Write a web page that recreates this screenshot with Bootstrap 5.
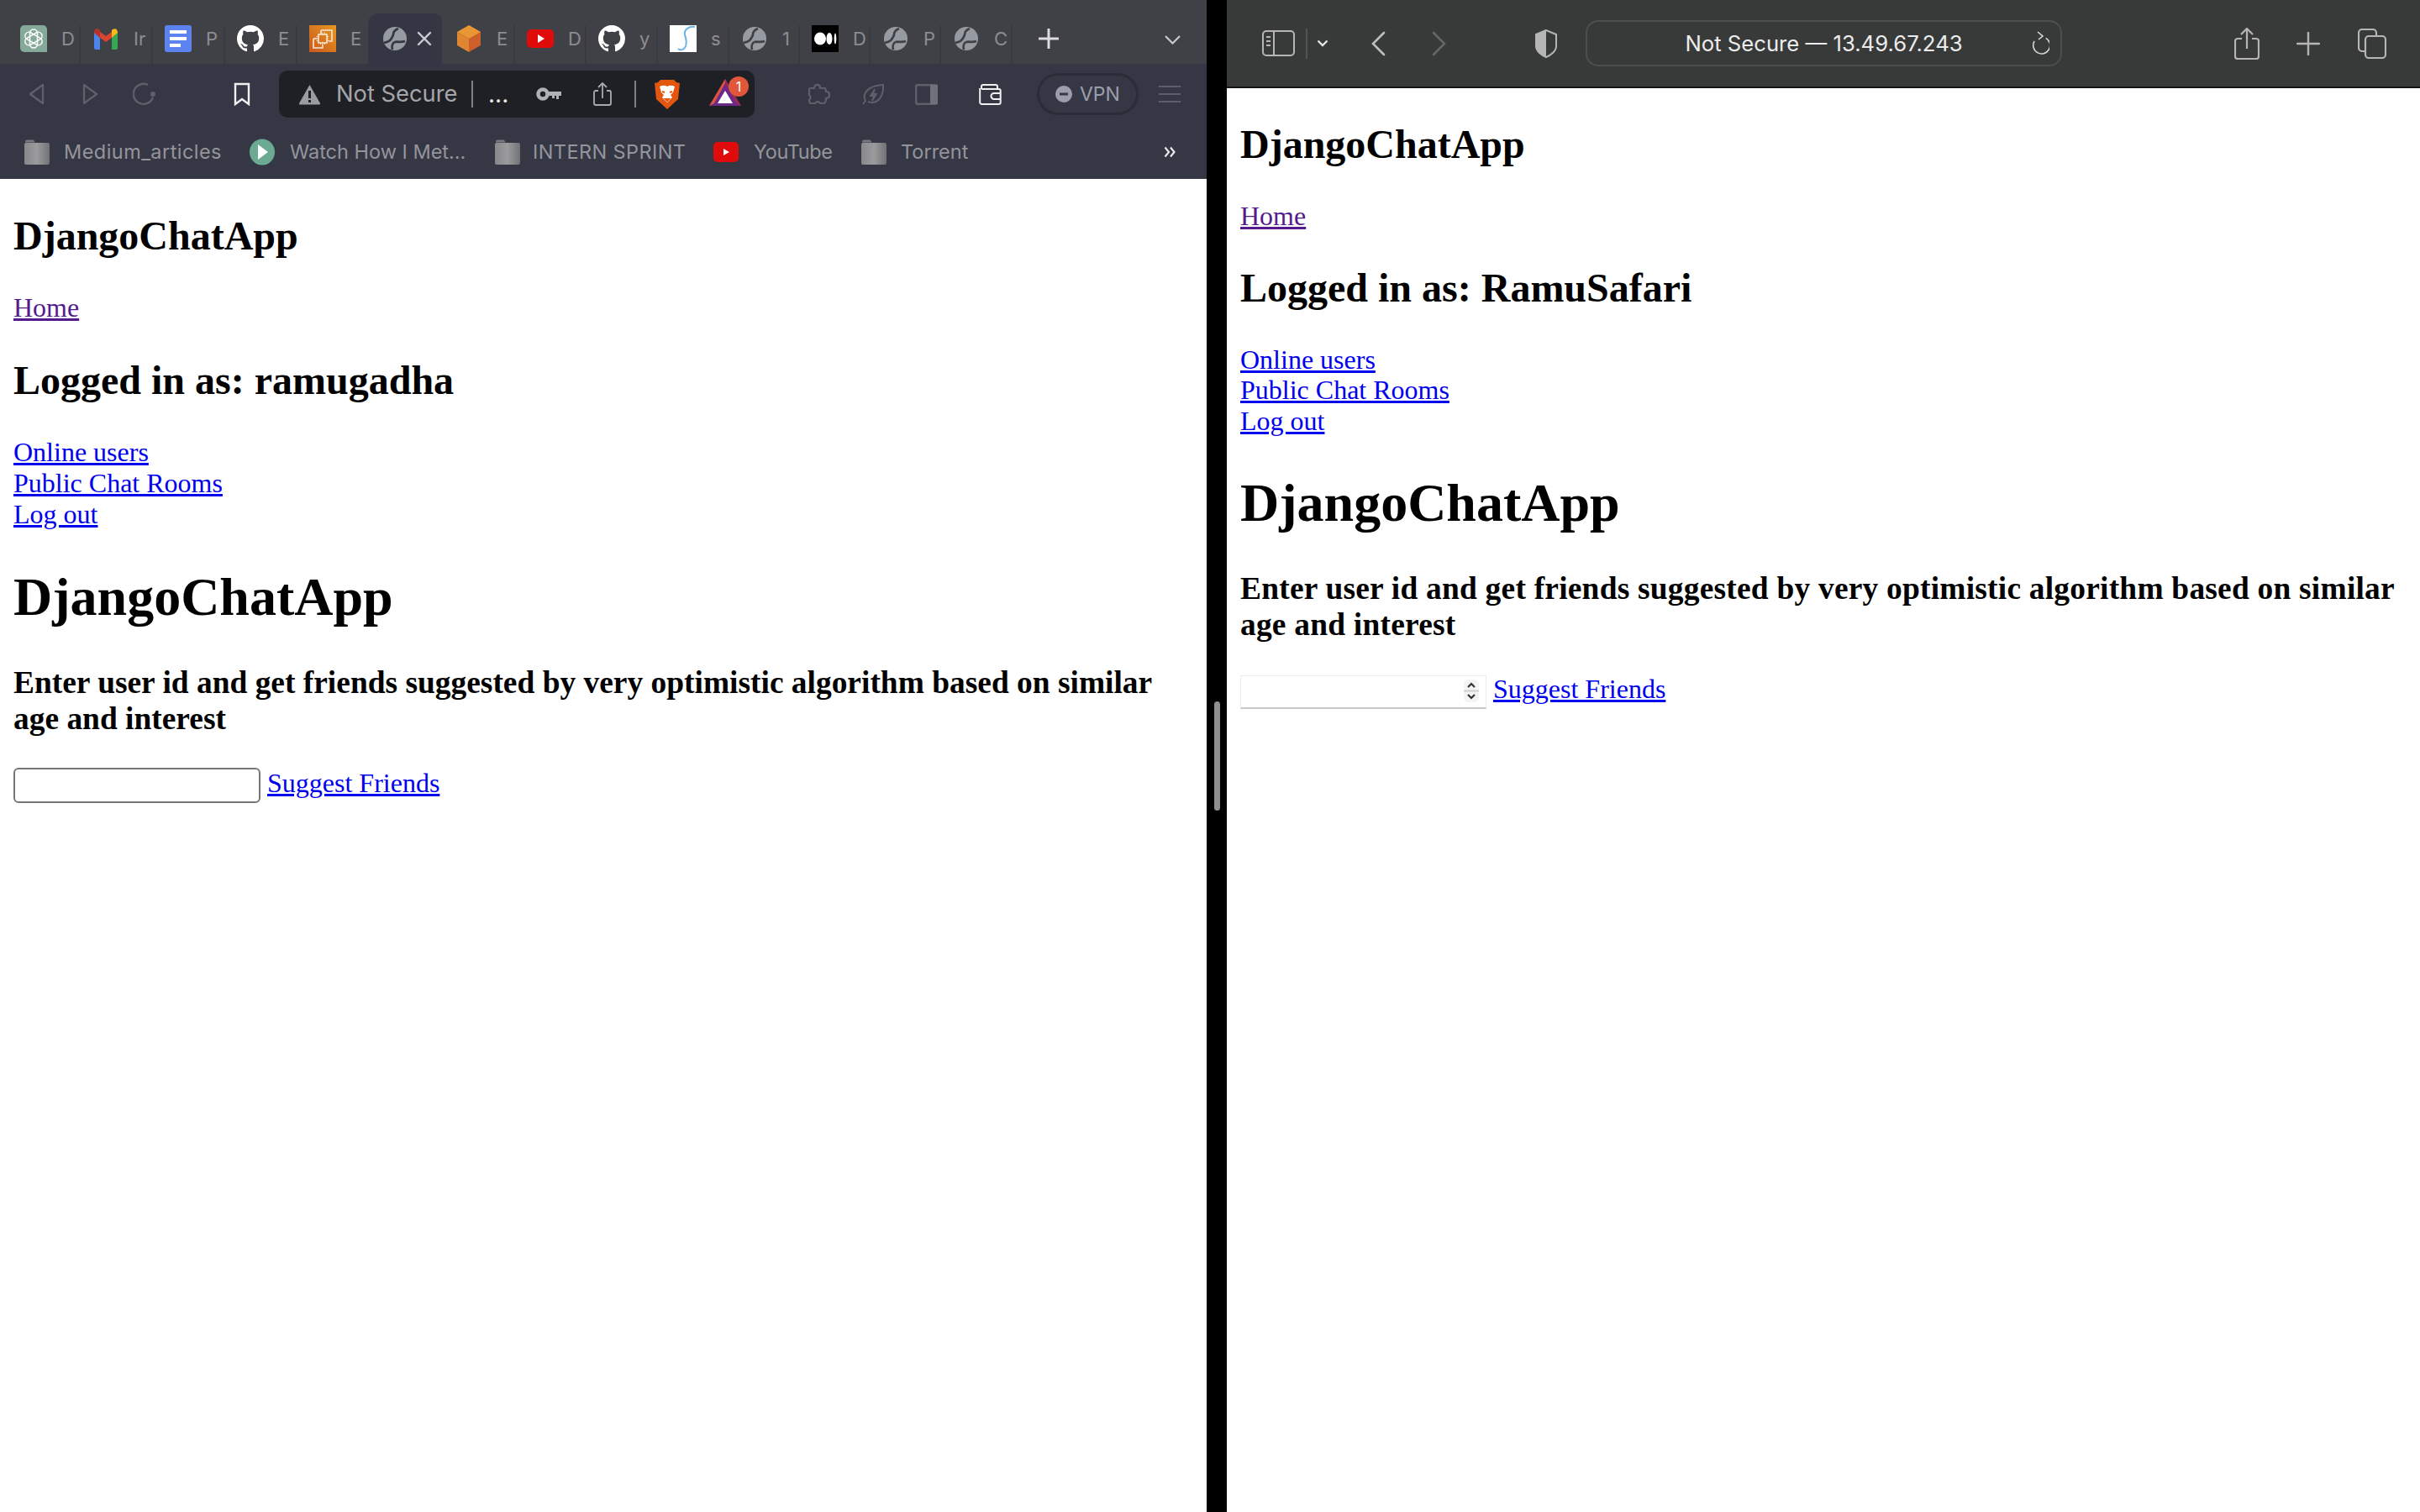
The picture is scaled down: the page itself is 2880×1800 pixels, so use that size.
<!DOCTYPE html>
<html lang="en">
<head>
<meta charset="utf-8">
<title>DjangoChatApp</title>
<link href="https://cdn.jsdelivr.net/npm/bootstrap@5.3.0/dist/css/bootstrap.min.css" rel="stylesheet">
<style>
html,body{margin:0;background:#000;}
.frame{height:1800px;width:2880px;}
.pane-left{width:1436px;background:#fff;}
.pane-right{width:1420px;background:#fff;}
.divider{width:24px;background:#000;}
.divider-handle{width:7px;height:130px;border-radius:4px;background:#8e8e8e;}
/* page content */
.doc{padding:40px 16px 0;font-family:"Liberation Serif","Times New Roman",serif;font-size:32px;line-height:37px;color:#000;}
.doc h1,.doc h2,.doc h3{font-family:inherit;font-weight:700;color:#000;}
.doc h2{font-size:48px;line-height:55px;margin:0 0 40px;}
.doc h1{font-size:64px;line-height:74px;margin:43px 0 43px;}
.doc h3{font-size:37.44px;line-height:43px;margin:0 0 37px;}
.doc a{color:#0000ee;text-decoration:underline;}
.doc a.seen{color:#551a8b;}
.doc .link-block{margin-bottom:40px;}
.doc-r{line-height:36.5px;}
.doc-r h2{line-height:54px;}
.doc-r h1{margin:43px 0 43px;line-height:74px;}
.doc-r h3{letter-spacing:.22px;line-height:43px;margin-bottom:37px;}
.field{box-sizing:border-box;height:42px;padding:2px 4px;font-size:26px;background:#fff;outline:0;}
.field-l{width:294px;border:2px solid #767676;border-radius:6px;}
.field-r{width:293px;height:40px;border:1px solid #ececec;border-bottom:2px solid #c8c8c8;border-radius:0;}
.field-wrap{display:inline-block;line-height:normal;}
.spin{position:absolute;right:9px;top:7px;}
/* Brave chrome */
.b-chrome{font-family:Inter,"Noto Sans",sans-serif;}
.b-tabs{height:76px;background:#404147;padding:16px 0 0 10px;}
.b-tab{width:85px;height:60px;flex:none;padding:14px 0 0 14px;color:#8c8d92;font-size:22px;line-height:32px;position:relative;gap:17px;white-space:nowrap;}
.b-tab.w86{width:86px;}
.b-tab.w84{width:84px;}
.b-tab::after{content:"";position:absolute;right:0;top:14px;bottom:0;width:2px;background:#3a3b40;}
.b-tab.on{width:90px;background:linear-gradient(90deg,#353644 88px,#404147 88px);border-radius:12px 12px 0 0;padding-left:16px;gap:10px;color:#c9cad0;}
.b-tab.on::after,.b-tab.pre::after{display:none;}
.gl{margin-top:2px;margin-left:2px;margin-right:2px;}
.x-i{margin-top:7px;}
.b-plus{margin:18px 0 0 31px;}
.b-down{margin:26px 0 0 126px;}
.b-bar{height:72px;background:#363745;padding-left:33px;}
.t-fwd{margin-left:45px;}
.t-rel{margin-left:40px;}
.t-mark{margin-left:92px;}
.omni{height:56px;width:566px;background:#1f2025;border-radius:10px;margin:0 0 0 34px;padding-left:23px;color:#a5a6aa;font-size:27.3px;}
.omni .txt{margin-left:18px;width:146px;flex:none;white-space:nowrap;}
.omni .bar{width:2px;height:32px;background:#7f8085;}
.bar-a{margin-left:15px;}
.bar-b{margin-left:27px;}
.dots{color:#e8e8e8;font-size:28px;line-height:28px;margin:0 37px 0 18px;width:20px;flex:none;white-space:nowrap;}
.share-b{margin-left:38px;}
.lion{margin-left:21px;}
.bat{margin-left:34px;}
.bat-badge{width:24px;height:24px;right:-9px;top:-3px;background:#e0573a;color:#fff;font-size:16px;}
.puz{margin-left:62px;}
.leaf-i{margin-left:37px;}
.side-i{margin-left:36px;}
.wal-i{margin-left:49px;}
.vpn{width:121px;height:50px;border:3px solid #2b2c38;border-radius:25px;margin-left:42px;color:#9c9eac;font-size:23px;gap:9px;padding-left:19px;}
.ham-i{margin-left:24px;}
.b-marks{height:65px;background:#363745;padding-left:29px;color:#94959b;font-size:23.5px;}
.mark-text{margin-left:17px;white-space:nowrap;flex:none;}
.m-w1{width:187px;letter-spacing:.45px;}
.m-w2{width:209px;margin-left:18px;}
.m-w3{width:181px;margin-left:15px;letter-spacing:.4px;}
.m-w4{width:93px;margin-left:18px;letter-spacing:-.4px;}
.m-w5{width:80px;}
.mk-2{margin-left:34px;}
.mk-3{margin-left:35px;}
.mk-4{margin-left:34px;}
.mk-5{margin-left:35px;}
.mk-6{margin-left:233px;}
/* Safari chrome */
.s-bar{height:105px;background:#383a39;border-bottom:2px solid #141414;position:relative;font-family:Inter,"Noto Sans",sans-serif;padding-left:42px;}
.url{width:567px;height:55px;border:2px solid #4d4f4e;border-radius:15px;color:#ececec;font-size:25.7px;margin-left:33px;position:relative;padding-top:2px;}
.url svg{position:absolute;right:13px;top:11px;}
.s-sep{width:2px;height:36px;background:#535453;margin-left:13px;}
.s-chev{margin-left:11px;}
.s-back{margin-left:50px;}
.s-fwd{margin-left:55px;}
.s-shield{margin-left:104px;}
.s-share{margin-left:205px;}
.s-plus{margin-left:44px;}
.s-tabs{margin-left:45px;}
</style>
</head>
<body>
<svg width="0" height="0" class="d-block position-absolute">
  <defs>
    <symbol id="globe" viewBox="0 0 28 28">
      <circle cx="14" cy="14" r="14" fill="#969ba1"/>
      <path d="M1 19c3-1 6-1 8-4s3-4 3-6 1-5 6-7" fill="none" stroke="#404147" stroke-width="2.800"/>
      <path d="M11 27c-1-4 0-8 3-9s7 1 12-1" fill="none" stroke="#404147" stroke-width="2.800"/>
    </symbol>
    <symbol id="globe-on" viewBox="0 0 28 28">
      <circle cx="14" cy="14" r="14" fill="#969ba1"/>
      <path d="M1 19c3-1 6-1 8-4s3-4 3-6 1-5 6-7" fill="none" stroke="#353644" stroke-width="2.800"/>
      <path d="M11 27c-1-4 0-8 3-9s7 1 12-1" fill="none" stroke="#353644" stroke-width="2.800"/>
    </symbol>
    <symbol id="cat" viewBox="0 0 16 16">
      <path fill="#fff" d="M8 0C3.58 0 0 3.58 0 8c0 3.54 2.29 6.53 5.47 7.59.4.07.55-.17.55-.38 0-.19-.01-.82-.01-1.49-2.01.37-2.53-.49-2.69-.94-.09-.23-.48-.94-.82-1.13-.28-.15-.68-.52-.01-.53.63-.01 1.08.58 1.23.82.72 1.21 1.87.87 2.33.66.07-.52.28-.87.51-1.07-1.78-.2-3.64-.89-3.64-3.95 0-.87.31-1.59.82-2.15-.08-.2-.36-1.02.08-2.12 0 0 .67-.21 2.2.82.64-.18 1.32-.27 2-.27.68 0 1.36.09 2 .27 1.53-1.04 2.2-.82 2.2-.82.44 1.1.16 1.92.08 2.12.51.56.82 1.27.82 2.15 0 3.07-1.87 3.75-3.65 3.95.29.25.54.73.54 1.48 0 1.07-.01 1.93-.01 2.2 0 .21.15.46.55.38A8.013 8.013 0 0016 8c0-4.42-3.58-8-8-8z"/>
    </symbol>
    <symbol id="folder" viewBox="0 0 30 32">
      <path d="M1 4c0-1.500.8-2.500 2-2.500h7c1 0 1.500.8 2 2l.5 1H1z" fill="#77787d"/>
      <rect x="0" y="5" width="30" height="26" rx="2" fill="url(#fg)"/>
    </symbol>
    <linearGradient id="fg" x1="0" x2="1" y1="0" y2="0">
      <stop offset="0" stop-color="#87888b"/><stop offset=".5" stop-color="#9b9b9d"/><stop offset="1" stop-color="#717276"/>
    </linearGradient>
    <linearGradient id="ec2" x1="0" x2="1" y1="1" y2="0">
      <stop offset="0" stop-color="#c8581f"/><stop offset="1" stop-color="#e9981f"/>
    </linearGradient>
  </defs>
</svg>

<div class="frame d-flex overflow-hidden">
  <!-- LEFT: Brave -->
  <div class="pane-left flex-shrink-0 d-flex flex-column">
    <div class="b-chrome">
      <div class="b-tabs d-flex">
        <div class="b-tab w86 d-flex">
          <svg width="32" height="32" viewBox="0 0 32 32" class="flex-shrink-0"><path d="M5 0h22a5 5 0 0 1 5 5v27H5a5 5 0 0 1-5-5V5a5 5 0 0 1 5-5z" fill="#86aa99"/><g fill="none" stroke="#fff" stroke-width="1.500"><rect x="11.500" y="5" width="9" height="22" rx="4.500"/><rect x="11.500" y="5" width="9" height="22" rx="4.500" transform="rotate(60 16 16)"/><rect x="11.500" y="5" width="9" height="22" rx="4.500" transform="rotate(120 16 16)"/></g></svg>
          <span>D</span>
        </div>
        <div class="b-tab w86 d-flex">
          <svg width="32" height="32" viewBox="0 0 32 32" class="flex-shrink-0"><path d="M2 8v19c0 1 1 2 2 2h5V15z" fill="#4a84ee"/><path d="M30 8v19c0 1-1 2-2 2h-5V15z" fill="#34a853"/><path d="M2 8l7 7 7 5 7-5 7-7-2-4-12 9L4 4z" fill="#d9432f"/><path d="M2 9c0-4 3-6 6-4l1 1v9z" fill="#b8322a"/><path d="M30 9c0-4-3-6-6-4l-1 1v9z" fill="#f3bb18"/></svg>
          <span>Ir</span>
        </div>
        <div class="b-tab w86 d-flex">
          <svg width="32" height="32" viewBox="0 0 32 32" class="flex-shrink-0"><rect width="32" height="32" rx="3" fill="#5c83ef"/><rect x="6" y="6" width="20" height="4" fill="#fff"/><rect x="6" y="14" width="20" height="4" fill="#fff"/><rect x="6" y="22" width="13" height="4" fill="#fff"/></svg>
          <span>P</span>
        </div>
        <div class="b-tab w86 d-flex">
          <svg width="32" height="32" class="flex-shrink-0"><use href="#cat"/></svg>
          <span>E</span>
        </div>
        <div class="b-tab w84 pre d-flex">
          <svg width="32" height="32" viewBox="0 0 32 32" class="flex-shrink-0"><rect width="32" height="32" fill="url(#ec2)"/><g fill="none" stroke="#f6e6d2" stroke-width="1.600"><path d="M14 6h13v13h-4"/><path d="M14 6v4"/><path d="M5 16v11h11v-4"/><path d="M5 16h4"/><rect x="11" y="11" width="10" height="10"/><path d="M13.500 8.500v2M16 8.500v2M18.500 8.500v2M13.500 21v2M16 21v2M18.500 21v2M8.500 13.500h2M8.500 16h2M8.500 18.500h2M21 13.500h2M21 16h2M21 18.500h2" stroke-width="1"/></g></svg>
          <span>E</span>
        </div>
        <div class="b-tab on d-flex">
          <svg width="28" height="28" class="flex-shrink-0 gl"><use href="#globe-on"/></svg>
          <svg width="18" height="18" viewBox="0 0 18 18" class="flex-shrink-0 x-i"><path d="M2 2l14 14M16 2L2 16" stroke="#c9cad0" stroke-width="2.400" stroke-linecap="round"/></svg>
        </div>
        <div class="b-tab d-flex">
          <svg width="32" height="32" viewBox="0 0 32 32" class="flex-shrink-0"><path d="M16 0l14 8v16l-14 8z" fill="#cc5f2a"/><path d="M16 32L2 24V8l14 8z" fill="#e08530"/><path d="M16 0L2 8l14 8 14-8z" fill="#e99735"/></svg>
          <span>E</span>
        </div>
        <div class="b-tab d-flex">
          <svg width="32" height="32" viewBox="0 0 32 32" class="flex-shrink-0"><rect y="5" width="32" height="22" rx="5" fill="#e00b0b"/><path d="M13 11l8 5-8 5z" fill="#fff"/></svg>
          <span>D</span>
        </div>
        <div class="b-tab d-flex">
          <svg width="32" height="32" class="flex-shrink-0"><use href="#cat"/></svg>
          <span>y</span>
        </div>
        <div class="b-tab d-flex">
          <svg width="32" height="32" viewBox="0 0 32 32" class="flex-shrink-0"><rect width="32" height="32" fill="#fff"/><path d="M30 2c-7-1-13 3-12 9 1 5 3 8 1 14-2 5-7 5-9 3" fill="none" stroke="#6db3e6" stroke-width="2"/></svg>
          <span>s</span>
        </div>
        <div class="b-tab w84 d-flex">
          <svg width="28" height="28" class="flex-shrink-0 gl"><use href="#globe"/></svg>
          <span>1</span>
        </div>
        <div class="b-tab w84 d-flex">
          <svg width="32" height="32" viewBox="0 0 32 32" class="flex-shrink-0"><rect width="32" height="32" fill="#000"/><ellipse cx="10" cy="16" rx="7" ry="7.500" fill="#fff"/><ellipse cx="21" cy="16" rx="3.500" ry="7" fill="#fff"/><ellipse cx="28" cy="16" rx="1.300" ry="6.500" fill="#fff"/></svg>
          <span>D</span>
        </div>
        <div class="b-tab w84 d-flex">
          <svg width="28" height="28" class="flex-shrink-0 gl"><use href="#globe"/></svg>
          <span>P</span>
        </div>
        <div class="b-tab d-flex">
          <svg width="28" height="28" class="flex-shrink-0 gl"><use href="#globe"/></svg>
          <span>C</span>
        </div>
        <svg width="24" height="24" viewBox="0 0 24 24" class="b-plus flex-shrink-0"><path d="M12 1v22M1 12h22" stroke="#dcdcde" stroke-width="3" stroke-linecap="round"/></svg>
        <svg width="19" height="11" viewBox="0 0 19 11" class="b-down flex-shrink-0"><path d="M1 1l8.500 8.500L18 1" fill="none" stroke="#c8c9cc" stroke-width="2.200"/></svg>
      </div>

      <div class="b-bar d-flex align-items-center">
        <svg width="20" height="26" viewBox="0 0 20 26" class="flex-shrink-0"><path d="M18 2L3 13l15 11z" fill="none" stroke="#5d5f6a" stroke-width="2.400" stroke-linejoin="round"/></svg>
        <svg width="20" height="26" viewBox="0 0 20 26" class="flex-shrink-0 t-fwd"><path d="M2 2l15 11L2 24z" fill="none" stroke="#5d5f6a" stroke-width="2.400" stroke-linejoin="round"/></svg>
        <svg width="28" height="28" viewBox="0 0 28 28" class="flex-shrink-0 t-rel"><path d="M18 3a12 12 0 1 0 6 15" fill="none" stroke="#5d5f6a" stroke-width="2.400"/><circle cx="24" cy="14" r="3" fill="#5d5f6a"/></svg>
        <svg width="20" height="28" viewBox="0 0 20 28" class="flex-shrink-0 t-mark"><path d="M2 2h16v24l-8-6-8 6z" fill="none" stroke="#f0f0f0" stroke-width="2.400"/></svg>
        <div class="omni d-flex align-items-center flex-shrink-0">
          <svg width="27" height="25" viewBox="0 0 27 25" class="flex-shrink-0"><path d="M13.500 1L26 23a1 1 0 0 1-1 1.500H2A1 1 0 0 1 1 23z" fill="#9a9ca0"/><rect x="12" y="8" width="3" height="9" fill="#1f2025"/><rect x="12" y="19" width="3" height="3" fill="#1f2025"/></svg>
          <span class="txt">Not Secure</span>
          <span class="bar bar-a flex-shrink-0"></span>
          <span class="dots">...</span>
          <svg width="30" height="16" viewBox="0 0 30 16" class="flex-shrink-0"><circle cx="8" cy="8" r="5.500" fill="none" stroke="#b0b1b5" stroke-width="4.500"/><path d="M14 5h16v5h-3v4h-3v-4h-2v3h-3v-3h-5z" fill="#b0b1b5"/></svg>
          <svg width="22" height="28" viewBox="0 0 22 28" class="flex-shrink-0 share-b"><path d="M6 10H3a2 2 0 0 0-2 2v13a2 2 0 0 0 2 2h16a2 2 0 0 0 2-2V12a2 2 0 0 0-2-2h-3M11 19V2M6 6l5-5 5 5" fill="none" stroke="#a9aaae" stroke-width="1.800"/></svg>
          <span class="bar bar-b flex-shrink-0"></span>
          <svg width="32" height="36" viewBox="0 0 32 36" class="flex-shrink-0 lion"><path d="M8 1h16l3 3 4 1-2 19-13 12L3 24 1 5l4-1z" fill="#e2560f"/><path d="M16 9c-3-2-6-1-9 0l2 7 3 3-2 3 6 6 6-6-2-3 3-3 2-7c-3-1-6-2-9 0z" fill="#fff"/><path d="M13 16l-3-1M19 16l3-1M14 24h4l-2 2z" stroke="#e2560f" stroke-width="2" fill="#e2560f"/></svg>
          <div class="position-relative flex-shrink-0 bat">
            <svg width="38" height="36" viewBox="0 0 38 36" class="d-block"><path d="M19 0L0 32h38z" fill="#6b2a8a"/><path d="M19 0L0 32l6-3 13-24z" fill="#e0523a"/><path d="M19 0v5l13 24 6 3z" fill="#9a2a52"/><path d="M19 14l-9 15h18z" fill="#fff"/></svg>
            <span class="position-absolute d-flex align-items-center justify-content-center rounded-circle bat-badge">1</span>
          </div>
        </div>
        <svg width="28" height="27" viewBox="0 0 28 27" class="flex-shrink-0 puz"><path d="M10 3c2-2 6-1 6 2v1h5c2 0 2 2 2 4 3 0 4 2 4 4s-1 4-4 4c0 3-1 6-3 6h-4c-1-2-4-3-6 0H5c-2 0-2-2-2-4 2-1 2-5 0-6V7c0-1 1-1 2-1h4c0-1 0-2 1-3z" fill="none" stroke="#5d5f6a" stroke-width="2.200"/></svg>
        <svg width="28" height="27" viewBox="0 0 28 27" class="flex-shrink-0 leaf-i"><path d="M2 25l3-4C1 14 6 3 26 2c1 14-7 24-18 20" fill="none" stroke="#5d5f6a" stroke-width="2"/><path d="M16 7l-5 8h4l-2 6 5-8h-4z" fill="none" stroke="#5d5f6a" stroke-width="1.800"/></svg>
        <svg width="27" height="25" viewBox="0 0 27 25" class="flex-shrink-0 side-i"><rect x="1.200" y="1.200" width="24.600" height="22.600" rx="1.500" fill="none" stroke="#5d5f6a" stroke-width="2.400"/><rect x="18" y="1" width="9" height="23" fill="#6f7079"/></svg>
        <svg width="27" height="25" viewBox="0 0 27 25" class="flex-shrink-0 wal-i"><path d="M3 6V3a2 2 0 0 1 2-2h15a2 2 0 0 1 2 2v3M1.200 5a2 2 0 0 0 0 1v15a2.500 2.500 0 0 0 2.500 3h20a2 2 0 0 0 2-2V8a2 2 0 0 0-2-2H3M26 11h-8a3 3 0 0 0 0 7h8" fill="none" stroke="#f0f0f0" stroke-width="2"/></svg>
        <div class="vpn d-flex align-items-center flex-shrink-0">
          <svg width="20" height="20" viewBox="0 0 20 20" class="flex-shrink-0"><circle cx="10" cy="10" r="10" fill="#9c9eac"/><rect x="5" y="8.500" width="10" height="3" fill="#363745"/></svg>
          <span>VPN</span>
        </div>
        <svg width="26" height="20" viewBox="0 0 26 20" class="flex-shrink-0 ham-i"><path d="M0 1h26M0 10h26M0 19h26" stroke="#5d5f6a" stroke-width="2"/></svg>
      </div>

      <div class="b-marks d-flex align-items-center">
        <svg width="30" height="32" class="flex-shrink-0"><use href="#folder"/></svg>
        <span class="mark-text m-w1">Medium_articles</span>
        <svg width="30" height="32" viewBox="0 0 30 32" class="flex-shrink-0 mk-2"><ellipse cx="15" cy="16" rx="15" ry="15.500" fill="#6cab93"/><path d="M10 7l12 9-12 9z" fill="#fff"/></svg>
        <span class="mark-text m-w2">Watch How I Met...</span>
        <svg width="30" height="32" class="flex-shrink-0 mk-3"><use href="#folder"/></svg>
        <span class="mark-text m-w3">INTERN SPRINT</span>
        <svg width="30" height="24" viewBox="0 0 30 24" class="flex-shrink-0 mk-4"><rect width="30" height="24" rx="5" fill="#e00b0b"/><path d="M12 8l7 4-7 4z" fill="#fff"/></svg>
        <span class="mark-text m-w4">YouTube</span>
        <svg width="30" height="32" class="flex-shrink-0 mk-5"><use href="#folder"/></svg>
        <span class="mark-text m-w5">Torrent</span>
        <svg width="14" height="14" viewBox="0 0 14 14" class="flex-shrink-0 mk-6"><path d="M1.500 1.500L6 7l-4.500 5.500M8 1.500L12.500 7 8 12.500" fill="none" stroke="#e8e8e8" stroke-width="2.200"/></svg>
      </div>
    </div>
    <div class="doc flex-grow-1">
      <h2>DjangoChatApp</h2>
      <div class="link-block"><a class="seen" href="#">Home</a></div>
      <h2>Logged in as: ramugadha</h2>
      <div><a href="#">Online users</a><br><a href="#">Public Chat Rooms</a><br><a href="#">Log out</a></div>
      <h1>DjangoChatApp</h1>
      <h3>Enter user id and get friends suggested by very optimistic algorithm based on similar age and interest</h3>
      <div><input class="field field-l" type="text" aria-label="User id"> <a href="#">Suggest Friends</a></div>
    </div>
  </div>

  <!-- divider -->
  <div class="divider flex-shrink-0 d-flex align-items-center justify-content-center">
    <div class="divider-handle"></div>
  </div>

  <!-- RIGHT: Safari -->
  <div class="pane-right flex-shrink-0 d-flex flex-column">
    <div class="s-bar d-flex align-items-center">
      <svg width="39" height="31" viewBox="0 0 39 31" class="flex-shrink-0"><rect x="1" y="1" width="37" height="29" rx="4" fill="none" stroke="#b4b5b4" stroke-width="2"/><path d="M14 1v29" stroke="#b4b5b4" stroke-width="2"/><path d="M5 8h5M5 13h5M5 18h5" stroke="#b4b5b4" stroke-width="2"/></svg>
      <span class="s-sep flex-shrink-0"></span>
      <svg width="14" height="9" viewBox="0 0 14 9" class="flex-shrink-0 s-chev"><path d="M1.500 1.500L7 7l5.500-5.500" fill="none" stroke="#e4e4e4" stroke-width="2.400"/></svg>
      <svg width="18" height="30" viewBox="0 0 18 30" class="flex-shrink-0 s-back"><path d="M16 2L3 15l13 13" fill="none" stroke="#bdbebd" stroke-width="2.600" stroke-linecap="round"/></svg>
      <svg width="18" height="30" viewBox="0 0 18 30" class="flex-shrink-0 s-fwd"><path d="M2 2l13 13L2 28" fill="none" stroke="#666766" stroke-width="2.600" stroke-linecap="round"/></svg>
      <svg width="28" height="34" viewBox="0 0 28 34" class="flex-shrink-0 s-shield"><path d="M14 1L2 6v14c0 6 7 11 12 13 5-2 12-7 12-13V6z" fill="none" stroke="#b4b5b4" stroke-width="2"/><path d="M14 1L2 6v14c0 6 7 11 12 13z" fill="#b4b5b4"/></svg>
      <div class="url d-flex align-items-center justify-content-center flex-shrink-0">
        <span>Not Secure — 13.49.67.243</span>
        <svg width="22" height="30" viewBox="0 0 22 30"><path d="M13 6a10 10 0 1 1-10 10" transform="rotate(30 11 16)" fill="none" stroke="#d8d8d8" stroke-width="1.600"/><path d="M8 1l6 5-5 4" fill="none" stroke="#d8d8d8" stroke-width="1.600"/></svg>
      </div>
      <svg width="30" height="38" viewBox="0 0 30 38" class="flex-shrink-0 s-share"><path d="M9 13H4a3 3 0 0 0-3 3v18a3 3 0 0 0 3 3h22a3 3 0 0 0 3-3V16a3 3 0 0 0-3-3h-5M15 25V2M8 8l7-7 7 7" fill="none" stroke="#b4b5b4" stroke-width="2.200"/></svg>
      <svg width="28" height="28" viewBox="0 0 28 28" class="flex-shrink-0 s-plus"><path d="M14 1v26M1 14h26" stroke="#b4b5b4" stroke-width="2.400" stroke-linecap="round"/></svg>
      <svg width="34" height="36" viewBox="0 0 34 36" class="flex-shrink-0 s-tabs"><rect x="9" y="9" width="24" height="26" rx="4" fill="none" stroke="#b4b5b4" stroke-width="2.200"/><path d="M9 27H5a4 4 0 0 1-4-4V5a4 4 0 0 1 4-4h13a4 4 0 0 1 4 4v4" fill="none" stroke="#b4b5b4" stroke-width="2.200"/></svg>
    </div>
    <div class="doc doc-r flex-grow-1">
      <h2>DjangoChatApp</h2>
      <div class="link-block"><a class="seen" href="#">Home</a></div>
      <h2>Logged in as: RamuSafari</h2>
      <div><a href="#">Online users</a><br><a href="#">Public Chat Rooms</a><br><a href="#">Log out</a></div>
      <h1>DjangoChatApp</h1>
      <h3>Enter user id and get friends suggested by very optimistic algorithm based on similar age and interest</h3>
      <div><span class="field-wrap position-relative"><input class="field field-r" type="text" aria-label="User id"><svg class="spin" width="18" height="27" viewBox="0 0 18 27"><rect width="18" height="27" rx="6" fill="#f4f4f4"/><path d="M0 13.500h18" stroke="#d0d0d0" stroke-width="2"/><path d="M5 9l4-4 4 4M5 18l4 4 4-4" fill="none" stroke="#333" stroke-width="2.200"/></svg></span> <a href="#">Suggest Friends</a></div>
    </div>
  </div>
</div>
</body>
</html>
